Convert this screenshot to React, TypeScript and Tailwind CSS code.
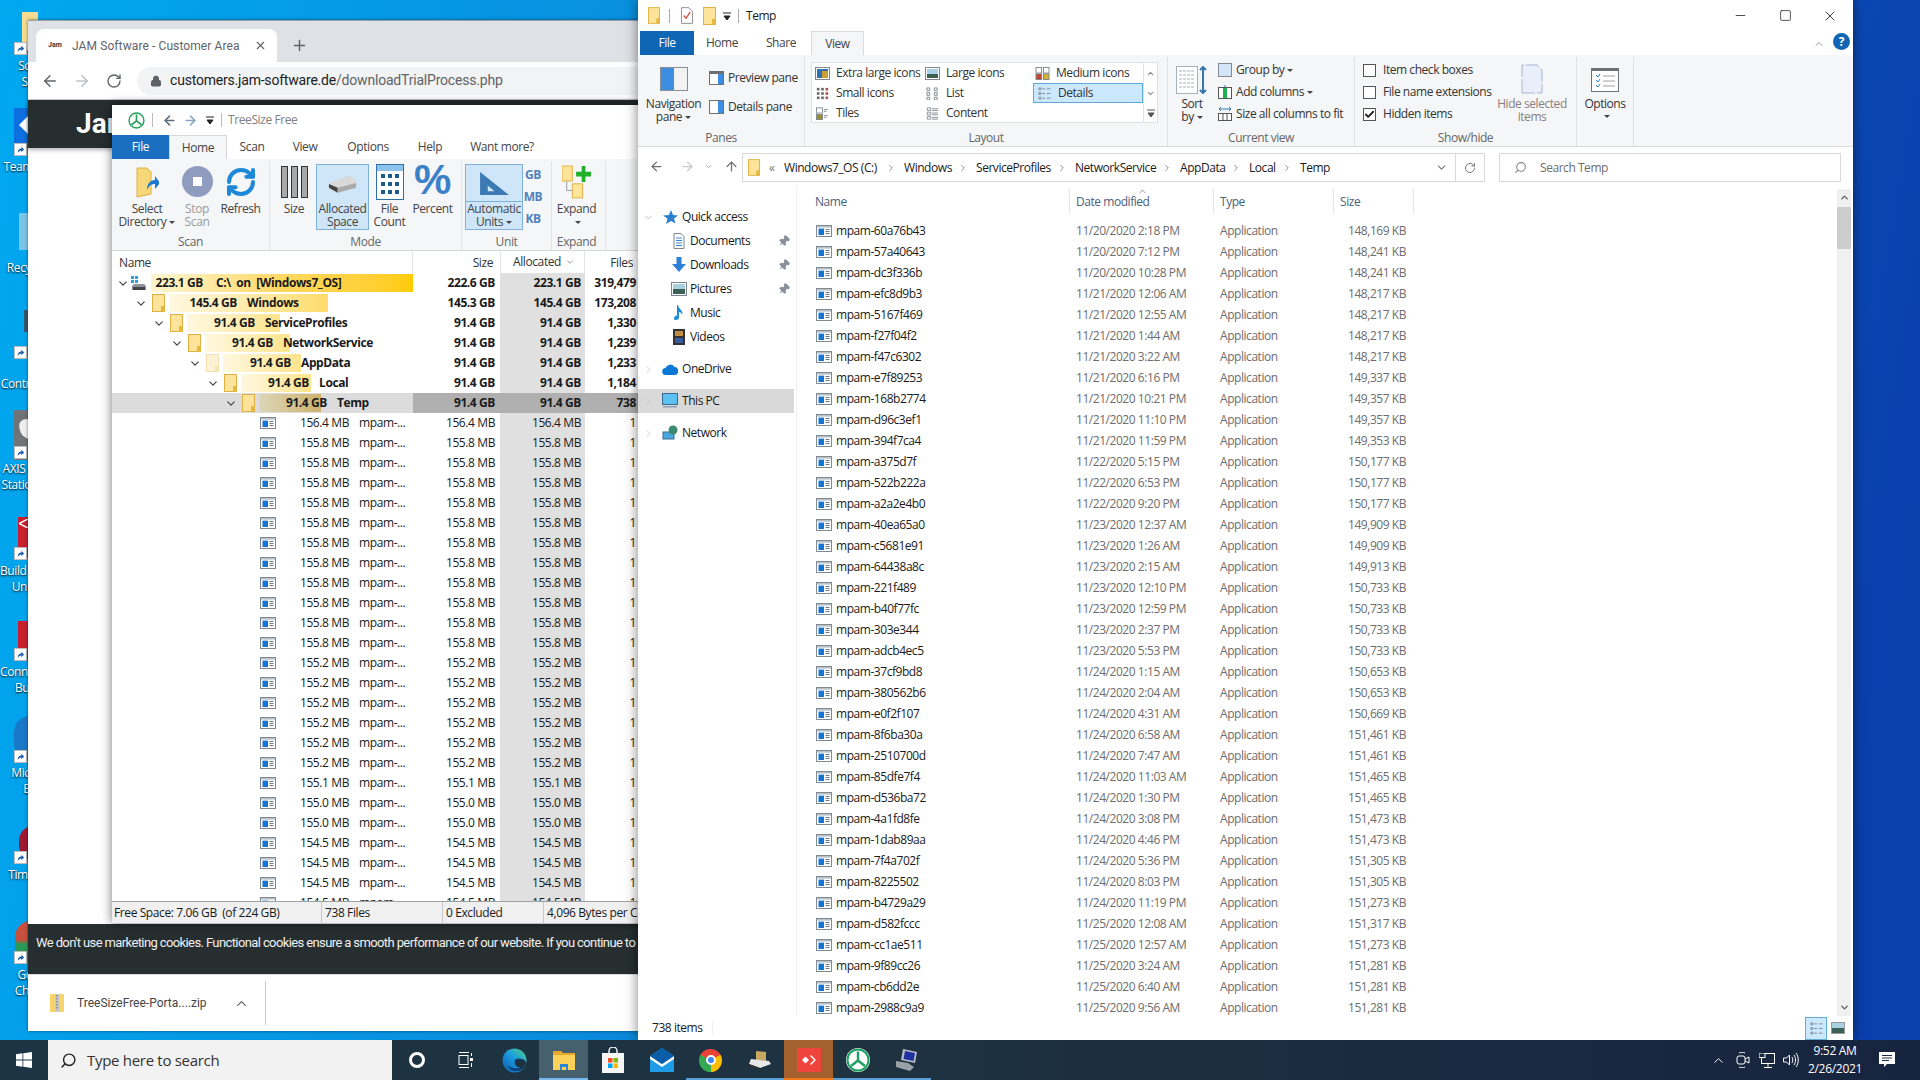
import React from "react";
import { ArrowLeft, ArrowRight, ArrowUp, RotateCw, Plus, X, Lock, ChevronDown, ChevronUp, ChevronRight, Search, Pin, RefreshCw, Minus, Square, Check } from "lucide-react";

const Folder = ({ pale = false, className = "w-[13px] h-[18px]" }: { pale?: boolean; className?: string }) => (
  <svg viewBox="0 0 13 18" className={className}>
    <rect x="0.5" y="0.5" width="12" height="17" fill={pale ? "#fdf3d4" : "#fde49a"} stroke={pale ? "#f0dfb0" : "#e0b040"} />
    <rect x="9" y="12" width="3.5" height="5.5" fill={pale ? "#f4e4b0" : "#e8b83c"} />
  </svg>
);

const Exe = ({ className = "w-[16px] h-[12px]" }: { className?: string }) => (
  <svg viewBox="0 0 16 12" className={className}>
    <rect x="0.5" y="0.5" width="15" height="11" fill="#fff" stroke="#7f8a93" />
    <rect x="1" y="1" width="14" height="1.6" fill="#b9c0c6" />
    <rect x="2.5" y="3.6" width="5.5" height="6.4" fill="#1476d2" />
    <path d="M9.5 4.5h4M9.5 6.5h4M9.5 8.5h4" stroke="#6c7a86" strokeWidth="1" />
  </svg>
);

const DESK = [
  { top: "top-[12px]", h: "h-[38px]", left: "left-[22px]", color: "bg-[#f6dc8e]", lines: ["Screen", "Shots"], ty: "top-[58px]", arrow: "top-[42px]" },
  { top: "top-[108px]", h: "h-[40px]", left: "left-[14px]", color: "bg-[#0e6fe0]", lines: ["TeamViewer"], ty: "top-[159px]", arrow: "top-[143px]" },
  { top: "top-[213px]", h: "h-[37px]", left: "left-[19px]", color: "bg-[#7cc4e8]", lines: ["Recycle Bin"], ty: "top-[260px]", arrow: "" },
  { top: "top-[310px]", h: "h-[22px]", left: "left-[24px]", color: "bg-[#39566a]", lines: ["Control Panel"], ty: "top-[376px]", arrow: "top-[346px]" },
  { top: "top-[410px]", h: "h-[50px]", left: "left-[14px]", color: "bg-[#6f7478]", lines: ["AXIS Camera", "Station Client"], ty: "top-[461px]", arrow: "top-[446px]" },
  { top: "top-[517px]", h: "h-[40px]", left: "left-[18px]", color: "bg-[#c8202f]", lines: ["Build Universal", "Universal"], ty: "top-[563px]", arrow: "top-[547px]" },
  { top: "top-[621px]", h: "h-[40px]", left: "left-[18px]", color: "bg-[#c8202f]", lines: ["Connect Build", "Building"], ty: "top-[664px]", arrow: "top-[648px]" },
  { top: "top-[716px]", h: "h-[44px]", left: "left-[14px]", color: "bg-[#1a78c8] rounded-l-full", lines: ["Microsoft", "Edge"], ty: "top-[765px]", arrow: "top-[750px]" },
  { top: "top-[825px]", h: "h-[36px]", left: "left-[19px]", color: "bg-[#a01830] rounded-l-full", lines: ["TimeSheet"], ty: "top-[867px]", arrow: "top-[851px]" },
  { top: "top-[921px]", h: "h-[42px]", left: "left-[15px]", color: "bg-[linear-gradient(#c8503c_45%,#2a9a58_55%)] rounded-l-full", lines: ["Google", "Chrome"], ty: "top-[967px]", arrow: "top-[951px]" },
];

function Desktop() {
  return (
    <>
      {DESK.map((d, i) => (
        <React.Fragment key={i}>
          <div className={`absolute ${d.top} ${d.h} ${d.left} w-[16px] ${d.color}`} />
          {d.arrow && (
            <div className={`absolute ${d.arrow} left-[14px] w-[13px] h-[13px] bg-white border border-[#bbb] flex items-center justify-center`}>
              <svg viewBox="0 0 10 10" className="w-[9px] h-[9px]"><path d="M2 9C2 5 4 4 6 4V2l3 3-3 3V6C4 6 3 7 2 9z" fill="#1a5fb4" /></svg>
            </div>
          )}
          <div className={`absolute ${d.ty} left-0 w-[72px] text-center text-white text-[12px] leading-[16px] font-['Open_Sans',sans-serif] tracking-[-0.4px] [text-shadow:0_1px_2px_#000]`}>
            {d.lines.map((l, j) => <div key={j} className="whitespace-nowrap">{l}</div>)}
          </div>
        </React.Fragment>
      ))}
      <svg viewBox="0 0 12 24" className="absolute left-[19px] top-[116px] w-[9px] h-[18px]"><path d="M12 0v24L0 12z" fill="#fff" /></svg>
      <svg viewBox="0 0 12 24" className="absolute left-[18px] top-[417px] w-[10px] h-[24px]"><path d="M12 0C4 0 0 4 2 12s4 8 10 12z" fill="#eee" /></svg>
      <svg viewBox="0 0 12 12" className="absolute left-[19px] top-[519px] w-[9px] h-[9px]"><path d="M12 0L0 6l12 6" fill="none" stroke="#fff" strokeWidth="2" /></svg>
    </>
  );
}

function ChromeWindow() {
  return (
    <div className="absolute left-[28px] top-[20px] w-[640px] h-[1011px] bg-white flex flex-col shadow-[0_0_3px_rgba(0,0,0,0.5)] font-['Roboto',sans-serif]">
      <div className="h-[42px] bg-[#dee1e6] flex items-end pl-[8px] border-t border-[#9aa0a6]">
        <div className="w-[241px] h-[33px] bg-white rounded-t-[8px] flex items-center pl-[12px] pr-[10px] text-[12px] text-[#5f6368]">
          <span className="text-[7px] font-bold w-[24px] text-[#333]">Jam</span>
          <span className="flex-1 whitespace-nowrap tracking-[0.1px]">JAM Software - Customer Area</span>
          <X size={13} className="text-[#5f6368]" />
        </div>
        <Plus size={17} className="ml-[14px] mb-[8px] text-[#5f6368]" />
      </div>
      <div className="h-[38px] flex items-center border-b border-[#ccc]">
        <ArrowLeft size={18} className="ml-[13px] text-[#5f6368]" />
        <ArrowRight size={18} className="ml-[14px] text-[#bdc1c6]" />
        <RotateCw size={16} className="ml-[15px] text-[#5f6368]" />
        <div className="ml-[15px] flex-1 h-[28px] rounded-l-full bg-[#f1f3f4] flex items-center pl-[13px]">
          <Lock size={12} className="text-[#5f6368] fill-[#5f6368]" />
          <span className="ml-[8px] text-[14px] text-[#202124] whitespace-nowrap tracking-[-0.2px]">customers.jam-software.de<span className="text-[#5f6368]">/downloadTrialProcess.php</span></span>
        </div>
      </div>
      <div className="flex-1 relative">
        <div className="h-[48px] bg-[#262e30] shadow-[0_2px_4px_rgba(0,0,0,0.3)] flex items-center pl-[48px] text-white text-[28px] font-bold">Jam</div>
      </div>
      <div className="h-[50px] bg-[#262e30] text-[#f0f0f0] text-[13px] pl-[8px] pt-[9px] whitespace-nowrap overflow-hidden tracking-[-0.61px]">We don't use marketing cookies. Functional cookies ensure a smooth performance of our website. If you continue to use our website</div>
      <div className="h-[57px] bg-white border-t border-[#ddd] flex items-center text-[12px] text-[#444]">
        <svg viewBox="0 0 14 18" className="ml-[22px] w-[14px] h-[18px]"><rect width="14" height="18" fill="#f5d46c" /><rect x="5" width="4" height="18" fill="#c9c9c9" /><path d="M7 1v15" stroke="#666" strokeDasharray="1.5 1.5" /></svg>
        <span className="ml-[13px] w-[136px] whitespace-nowrap">TreeSizeFree-Porta....zip</span>
        <ChevronUp size={15} className="ml-[21px] text-[#5f6368]" />
        <div className="ml-[16px] w-px h-[44px] bg-[#ccc]" />
      </div>
    </div>
  );
}

const Caret = () => <span className="inline-block ml-[3px] align-middle w-0 h-0 border-l-[3px] border-r-[3px] border-t-[3px] border-l-transparent border-r-transparent border-t-[#444]" />;

const RB = ({ w, icon, l1, l2, gray, cls = "", iconH = "h-[41px]" }: { w: string; icon: React.ReactNode; l1: string; l2?: React.ReactNode; gray?: boolean; cls?: string; iconH?: string }) => (
  <div className={`${w} ${cls} flex flex-col items-center ${gray ? "text-[#9a9a9a]" : "text-[#444]"}`}>
    <div className={`${iconH} flex items-center justify-center`}>{icon}</div>
    <div className="leading-[13px] whitespace-nowrap">{l1}</div>
    {l2 && <div className="leading-[13px] whitespace-nowrap">{l2}</div>}
  </div>
);

const TreeIcon = ({ className }: { className: string }) => (
  <svg viewBox="0 0 24 24" className={className}>
    <circle cx="12" cy="12" r="10.5" fill="none" stroke="currentColor" strokeWidth="2" />
    <path d="M12 3.5v9M12 12.5L5 18M12 12.5l7 5.5" stroke="currentColor" strokeWidth="2.4" fill="none" />
  </svg>
);

const GROUP = "flex flex-col border-r border-[#e2e4e7] h-[89px] mt-[2px] shrink-0";
const GLABEL = "mt-auto h-[17px] text-center text-[#666] leading-[17px]";

function TreeRibbon() {
  return (
    <div className="h-[92px] bg-[#f5f6f7] border-b border-[#d5d7da] flex shrink-0">
      <div className={`${GROUP} w-[158px]`}>
        <div className="flex pl-[5px]">
          <RB w="w-[60px]" icon={<svg viewBox="0 0 24 32" className="w-[24px] h-[32px]"><path d="M2 2h10l4 4v22l-14 3z" fill="#f6d77a" stroke="#e0b040" /><path d="M12 24c0-7 4-10 8-10V10l5 7-5 6v-5c-4 0-6 2-8 6z" fill="#1e78d0" /></svg>} l1="Select" l2={<>Directory<Caret /></>} />
          <RB w="w-[40px]" gray icon={<div className="w-[31px] h-[31px] rounded-full bg-[#8f9bbf] flex items-center justify-center"><div className="w-[9px] h-[9px] bg-white" /></div>} l1="Stop" l2="Scan" />
          <RB w="w-[47px]" icon={<RefreshCw size={32} strokeWidth={3} className="text-[#1e88d8]" />} l1="Refresh" />
        </div>
        <div className={GLABEL}>Scan</div>
      </div>
      <div className={`${GROUP} w-[192px]`}>
        <div className="flex pl-[2px]">
          <RB w="w-[44px]" icon={<div className="flex gap-[3px]">{[0, 1, 2].map((i) => <div key={i} className="w-[7px] h-[32px] bg-[#a8a8a8] border border-[#333]" />)}</div>} l1="Size" />
          <RB w="w-[53px]" cls="bg-[#cfe5f8] border border-[#7fb0dc] h-[66px] mt-[3px]" iconH="h-[37px]" icon={<svg viewBox="0 0 30 20" className="w-[29px] h-[20px]"><path d="M2 9l20-8 7 5v8l-20 5-8-5z" fill="#d9d9d9" /><path d="M1 10l9 4v5l-9-5z" fill="#444" /><path d="M10 14l19-5v5l-19 5z" fill="#aaa" /></svg>} l1="Allocated" l2="Space" />
          <RB w="w-[41px]" icon={<svg viewBox="0 0 28 36" className="w-[28px] h-[36px]"><rect x=".5" y=".5" width="27" height="35" fill="#fff" stroke="#2f6ea8" /><rect x="1" y="1" width="26" height="6" fill="#8cc4ee" />{[10, 18, 26].map((y) => [5, 12, 19].map((x) => <rect key={`${x}${y}`} x={x} y={y} width="4" height="4" fill="#1e5c8c" />))}</svg>} l1="File" l2="Count" />
          <RB w="w-[45px]" icon={<span className="text-[42px] leading-[40px] -mt-[3px] font-bold text-[#3b80c8] font-['Liberation_Sans',sans-serif]">%</span>} l1="Percent" />
        </div>
        <div className={GLABEL}>Mode</div>
      </div>
      <div className={`${GROUP} w-[90px]`}>
        <div className="flex pl-[3px]">
          <div className="w-[58px] h-[66px] mt-[3px] border border-[#7fb0dc] flex flex-col items-center bg-[#cfe5f8]">
            <div className="h-[37px] flex items-center justify-center border-b border-[#7fb0dc] w-full"><svg viewBox="0 0 32 26" className="w-[31px] h-[25px]"><path d="M1 25V1l30 24zM9 21h7L9 15z" fill="#3d79b5" fillRule="evenodd" /></svg></div>
            <div className="leading-[13px] text-[#444] whitespace-nowrap">Automatic</div>
            <div className="leading-[13px] text-[#444] whitespace-nowrap">Units<Caret /></div>
          </div>
          <div className="w-[20px] flex flex-col items-center text-[#4f81bd] font-bold leading-[22px] mt-[3px]">
            <span>GB</span><span>MB</span><span>KB</span>
          </div>
        </div>
        <div className={GLABEL}>Unit</div>
      </div>
      <div className={`${GROUP} w-[54px]`}>
        <RB w="w-[49px]" icon={<svg viewBox="0 0 32 36" className="w-[30px] h-[34px]"><rect x="0" y="1" width="11" height="16" fill="#fde49a" stroke="#e0b040" /><rect x="11" y="20" width="11" height="15" fill="#fde49a" stroke="#e0b040" /><path d="M5 17v10h6" stroke="#999" fill="none" /><path d="M21 1h4v6h6v5h-6v6h-4v-6h-6V7h6z" fill="#22b02c" /></svg>} l1="Expand" l2={<Caret />} />
        <div className="mt-auto h-[17px] w-[49px] text-center text-[#666] leading-[17px]">Expand</div>
      </div>
    </div>
  );
}

type T = { pl: string; bar: string; size: string; name: string; alloc: string; s: string; files: string; icon: "drive" | "folder" | "pale"; num?: string; gap?: string };
const TREE: T[] = [
  { pl: "pl-[1px]", bar: "w-[262px] from-[#fff6d0] via-[#ffd860] to-[#ffcc00]", size: "223.1 GB", name: "C:\\  on  [Windows7_OS]", s: "222.6 GB", alloc: "223.1 GB", files: "319,479", icon: "drive", num: "w-[52px]", gap: "ml-[13px]" },
  { pl: "pl-[19px]", bar: "w-[159px] from-[#fff8e0] to-[#ffdc6a]", size: "145.4 GB", name: "Windows", s: "145.3 GB", alloc: "145.4 GB", files: "173,208", icon: "folder" },
  { pl: "pl-[37px]", bar: "w-[93px] from-[#fff8e0] to-[#ffe48a]", size: "91.4 GB", name: "ServiceProfiles", s: "91.4 GB", alloc: "91.4 GB", files: "1,330", icon: "folder" },
  { pl: "pl-[55px]", bar: "w-[85px] from-[#fff8e0] to-[#ffe48a]", size: "91.4 GB", name: "NetworkService", s: "91.4 GB", alloc: "91.4 GB", files: "1,239", icon: "folder" },
  { pl: "pl-[73px]", bar: "w-[78px] from-[#fff8e0] to-[#ffe48a]", size: "91.4 GB", name: "AppData", s: "91.4 GB", alloc: "91.4 GB", files: "1,233", icon: "pale" },
  { pl: "pl-[91px]", bar: "w-[70px] from-[#fff8e0] to-[#ffe48a]", size: "91.4 GB", name: "Local", s: "91.4 GB", alloc: "91.4 GB", files: "1,184", icon: "folder" },
  { pl: "pl-[109px]", bar: "w-[62px] from-[#dcd6b8] to-[#cdb16c]", size: "91.4 GB", name: "Temp", s: "91.4 GB", alloc: "91.4 GB", files: "738", icon: "folder" },
];
const TFILES = ["156.4", ...Array(11).fill("155.8"), ...Array(6).fill("155.2"), "155.1", "155.0", "155.0", "154.5", "154.5", "154.5", "154.5"];

function TreeSize() {
  return (
    <div className="absolute left-[112px] top-[105px] w-[540px] h-[818px] bg-white flex flex-col text-[12px] text-[#1a1a1a] shadow-[0_0_10px_rgba(0,0,0,0.55)] font-['Open_Sans',sans-serif] tracking-[-0.4px]">
      <div className="h-[30px] flex items-center shrink-0 text-[#555]">
        <TreeIcon className="ml-[16px] w-[17px] h-[17px] text-[#27a060]" />
        <div className="ml-[7px] w-px h-[14px] bg-[#bbb]" />
        <ArrowLeft size={15} strokeWidth={2.4} className="ml-[9px] text-[#5b6b7c]" />
        <ArrowRight size={15} strokeWidth={2.4} className="ml-[6px] text-[#8aa3c0]" />
        <svg viewBox="0 0 8 8" className="ml-[8px] w-[8px] h-[8px]"><path d="M0 1h8M1 4h6l-3 4z" stroke="#222" fill="#222" strokeWidth="1" /></svg>
        <div className="ml-[7px] w-px h-[14px] bg-[#bbb]" />
        <span className="ml-[6px] text-[#808080]">TreeSize Free</span>
      </div>
      <div className="h-[24px] flex shrink-0 items-stretch text-[#444] leading-[23px]">
        <div className="w-[57px] bg-[#1a6fc0] text-white text-center">File</div>
        <div className="w-[58px] text-center border-x border-t border-[#d5d7da] bg-[#f5f6f7] h-[24px] -mb-px z-10">Home</div>
        <div className="ml-[5px] w-[40px] text-center">Scan</div>
        <div className="ml-[13px] w-[40px] text-center">View</div>
        <div className="ml-[18px] w-[50px] text-center">Options</div>
        <div className="ml-[17px] w-[40px] text-center">Help</div>
        <div className="ml-[12px] w-[80px] text-center whitespace-nowrap">Want more?</div>
      </div>
      <TreeRibbon />
      <div className="flex h-[22px] shrink-0 leading-[24px] text-[#333]">
        <div className="w-[301px] pl-[7px] border-r border-[#e3e3e3]">Name</div>
        <div className="w-[87px] text-right pr-[7px]">Size</div>
        <div className="w-[85px] pl-[12px] flex items-center bg-white border-x border-[#e3e3e3]">Allocated<ChevronDown size={10} className="ml-[4px] text-[#888]" /></div>
        <div className="w-[53px] text-right pr-[5px]">Files</div>
      </div>
      <div className="flex-1 overflow-hidden font-bold">
        {TREE.map((r, i) => {
          const sel = i === 6;
          return (
            <div key={i} className={`flex h-[20px] leading-[20px] ${sel ? "bg-[#dcdcdc]" : ""}`}>
              <div className={`w-[301px] ${r.pl} flex items-center shrink-0`}>
                <ChevronDown size={13} strokeWidth={2.2} className="text-[#444] ml-[2px] w-[16px] shrink-0" />
                <div className="w-[20px] flex items-center pl-[3px] shrink-0">
                  {r.icon === "drive" ? (
                    <svg viewBox="0 0 16 14" className="w-[16px] h-[14px] -ml-[3px]"><rect x="0" y="0" width="3" height="3" fill="#2aa0e0" /><rect x="4" y="0" width="3" height="3" fill="#2aa0e0" /><rect x="0" y="4" width="3" height="3" fill="#2aa0e0" /><rect x="4" y="4" width="3" height="3" fill="#2aa0e0" /><path d="M3 8h10l2 2v4H1v-4z" fill="#8d9499" /><rect x="2" y="11" width="12" height="3" fill="#444" /></svg>
                  ) : (
                    <Folder pale={r.icon === "pale"} />
                  )}
                </div>
                <div className="relative flex flex-1 h-[18px] leading-[18px] min-w-0">
                  <div className={`absolute left-[0px] top-0 bottom-0 ${r.bar} bg-gradient-to-r`} />
                  <span className={`relative ${r.num ?? "w-[68px]"} text-right shrink-0 whitespace-nowrap`}>{r.size}</span>
                  <span className={`relative ${r.gap ?? "ml-[10px]"} whitespace-pre`}>{r.name}</span>
                </div>
              </div>
              <div className={`w-[87px] text-right pr-[5px] ${sel ? "bg-[#b0b0b0]" : ""}`}>{r.s}</div>
              <div className={`w-[85px] text-right pr-[4px] ${sel ? "bg-[#b0b0b0]" : "bg-[#e0e0e0]"}`}>{r.alloc}</div>
              <div className={`w-[53px] text-right pr-[2px] ${sel ? "bg-[#b0b0b0]" : ""}`}>{r.files}</div>
            </div>
          );
        })}
        {TFILES.map((s, i) => (
          <div key={i} className="flex h-[20px] leading-[20px] font-normal">
            <div className="w-[301px] pl-[148px] flex items-center shrink-0">
              <Exe />
              <span className="ml-[1px] w-[72px] text-right whitespace-nowrap">{s} MB</span>
              <span className="ml-[10px] whitespace-nowrap">mpam-...</span>
            </div>
            <div className="w-[87px] text-right pr-[5px]">{s} MB</div>
            <div className="w-[85px] text-right pr-[4px] bg-[#e0e0e0]">{s} MB</div>
            <div className="w-[53px] text-right pr-[2px]">1</div>
          </div>
        ))}
      </div>
      <div className="h-[22px] bg-[#f0f0f0] border-t border-[#a0a0a0] flex shrink-0 leading-[21px] whitespace-pre overflow-hidden">
        <div className="w-[210px] pl-[2px] border-r border-[#c8c8c8] shrink-0">Free Space: 7.06 GB  (of 224 GB)</div>
        <div className="w-[121px] pl-[3px] border-r border-[#c8c8c8] shrink-0">738 Files</div>
        <div className="w-[101px] pl-[3px] border-r border-[#c8c8c8] shrink-0">0 Excluded</div>
        <div className="pl-[3px] shrink-0">4,096 Bytes per Cluster</div>
      </div>
    </div>
  );
}

const LI = ({ k }: { k: string }) => {
  const g = "#7d8790";
  const c = "w-[15px] h-[13px] shrink-0";
  switch (k) {
    case "xl": return <svg viewBox="0 0 15 13" className={c}><rect x=".5" y=".5" width="14" height="12" fill="#fff" stroke={g} /><rect x="2" y="2" width="11" height="9" fill="#2f6fb4" /><rect x="7" y="4" width="6" height="7" fill="#c9a030" /></svg>;
    case "l": return <svg viewBox="0 0 15 13" className={c}><rect x=".5" y=".5" width="14" height="12" fill="#fff" stroke={g} /><rect x="2" y="2" width="11" height="5" fill="#a8d0e8" /><rect x="2" y="7" width="11" height="4" fill="#3c6050" /></svg>;
    case "m": return <svg viewBox="0 0 15 14" className={c}><rect x=".5" y=".5" width="6" height="6" fill="#fff" stroke={g} /><rect x="8.5" y=".5" width="6" height="6" fill="#fff" stroke={g} /><rect x=".5" y="7.5" width="6" height="6" fill="#c84030" stroke={g} /><rect x="8.5" y="7.5" width="6" height="6" fill="#d8b030" stroke={g} /></svg>;
    case "s": return <svg viewBox="0 0 15 15" className={c}>{[1, 6, 11].map((x) => [1, 6, 11].map((y) => <rect key={`${x}${y}`} x={x} y={y} width="3" height="3" fill={x === 11 ? "#b05050" : "#666"} />))}</svg>;
    case "list": return <svg viewBox="0 0 15 14" className={c}><path d="M1.5 1h3v3h-3zM1.5 6h3v3h-3zM1.5 11h3v3h-3zM9.5 1h3v3h-3zM9.5 6h3v3h-3zM9.5 11h3v3h-3z" fill="none" stroke={g} /></svg>;
    case "det": return <svg viewBox="0 0 15 14" className={c}><path d="M1.5 1h2v2h-2zM1.5 6h2v2h-2zM1.5 11h2v2h-2z" fill="none" stroke={g} /><path d="M5 2h3M10 2h4M5 7h3M10 7h4M5 12h3M10 12h4" stroke={g} /></svg>;
    case "tiles": return <svg viewBox="0 0 15 15" className={c}><rect x=".5" y="1" width="7" height="6" fill="#fff" stroke={g} /><rect x=".5" y="8.5" width="7" height="6" fill="#a08a30" stroke={g} /><path d="M9 3h5M9 5h3M9 10h5M9 12h3" stroke={g} /></svg>;
    default: return <svg viewBox="0 0 15 15" className={c}><path d="M1.5 1h4v3h-4zM1.5 6h4v3h-4zM1.5 11h4v3h-4z" fill="none" stroke={g} /><path d="M7 2h7M7 4h7M7 7h7M7 9h7M7 12h7M7 14h7" stroke={g} /></svg>;
  }
};

const ECol = ({ k, t, sel }: { k: string; t: string; sel?: boolean }) => (
  <div className={`h-[20px] flex items-center pl-[3px] ${sel ? "bg-[#cce8ff] border border-[#5fa8dc] ml-[1px]" : ""}`}>
    <div className="w-[21px]"><LI k={k} /></div><span className="whitespace-nowrap">{t}</span>
  </div>
);

const EG = "flex flex-col border-r border-[#dfe1e4] h-[89px] mt-[2px] shrink-0 relative";
const EL = "mt-auto h-[16px] leading-[16px] text-center text-[#666]";

function ExplorerRibbon() {
  return (
    <div className="h-[92px] bg-[#f5f6f7] border-b border-[#dadbdc] flex shrink-0">
      <div className={`${EG} w-[167px]`}>
        <div className="flex h-[72px]">
          <div className="w-[71px] flex flex-col items-center pt-[10px] leading-[13px]">
            <svg viewBox="0 0 28 24" className="w-[28px] h-[24px] mb-[6px]"><rect x=".5" y=".5" width="27" height="23" fill="#f2f2f2" stroke="#8a8f95" /><rect x="1" y="1" width="13" height="22" fill="#3d8ee0" /></svg>
            <span className="whitespace-nowrap">Navigation</span>
            <span>pane<Caret /></span>
          </div>
          <div className="flex flex-col pt-[11px] gap-[15px]">
            <div className="flex items-center h-[20px]"><svg viewBox="0 0 15 14" className="w-[15px] h-[14px] mr-[4px]"><rect x=".5" y=".5" width="14" height="13" fill="#fff" stroke="#707070" /><rect x="1" y="1" width="13" height="2" fill="#707070" /><rect x="9" y="3" width="5" height="10" fill="#3d8ee0" /></svg>Preview pane</div>
            <div className="flex items-center h-[20px] -mt-[6px]"><svg viewBox="0 0 15 14" className="w-[15px] h-[14px] mr-[4px]"><rect x=".5" y=".5" width="14" height="13" fill="#fff" stroke="#707070" /><rect x="9" y="1" width="5" height="12" fill="#3d8ee0" /></svg>Details pane</div>
          </div>
        </div>
        <div className={EL}>Panes</div>
      </div>
      <div className={`${EG} w-[363px]`}>
        <div className="ml-[6px] mt-[5px] w-[347px] h-[61px] bg-white border border-[#dfe1e4] flex">
          <div className="w-[110px]"><ECol k="xl" t="Extra large icons" /><ECol k="s" t="Small icons" /><ECol k="tiles" t="Tiles" /></div>
          <div className="w-[110px]"><ECol k="l" t="Large icons" /><ECol k="list" t="List" /><ECol k="content" t="Content" /></div>
          <div className="w-[111px]"><ECol k="m" t="Medium icons" /><ECol k="det" t="Details" sel /></div>
          <div className="flex-1 border-l border-[#dfe1e4] flex flex-col items-center justify-around text-[#8a8a8a]">
            <ChevronUp size={9} strokeWidth={3} /><ChevronDown size={9} strokeWidth={3} /><svg viewBox="0 0 8 8" className="w-[8px] h-[8px]"><path d="M0 1h8M1 4h6l-3 4z" stroke="#555" fill="#555" /></svg>
          </div>
        </div>
        <div className={EL}>Layout</div>
      </div>
      <div className={`${EG} w-[187px]`}>
        <div className="flex h-[72px]">
          <div className="w-[48px] flex flex-col items-center pt-[9px] leading-[13px] shrink-0">
            <svg viewBox="0 0 32 28" className="w-[32px] h-[28px]"><rect x=".5" y=".5" width="21" height="27" fill="#fff" stroke="#a8b0b8" /><path d="M3 5h16M3 9h16M3 13h16M3 17h16M3 21h16" stroke="#a8b0b8" strokeDasharray="3 1" /><path d="M27 1v26M24 4l3-3 3 3M24 24l3 3 3-3" stroke="#3578a8" strokeWidth="2" fill="none" /></svg>
            <span className="mt-[3px]">Sort</span>
            <span>by<Caret /></span>
          </div>
          <div className="pl-[2px] flex flex-col pt-[2px] whitespace-nowrap">
            <div className="h-[22px] flex items-center"><svg viewBox="0 0 14 14" className="w-[14px] h-[14px] mr-[4px]"><rect x=".5" y=".5" width="13" height="13" fill="#d2e6f8" stroke="#889" /></svg>Group by<Caret /></div>
            <div className="h-[22px] flex items-center"><svg viewBox="0 0 14 14" className="w-[14px] h-[14px] mr-[4px]"><rect x=".5" y="2.5" width="13" height="11" fill="#fff" stroke="#555" /><rect x="5" y="3" width="4" height="10" fill="#22b050" /><path d="M7 0v2" stroke="#3578a8" /></svg>Add columns<Caret /></div>
            <div className="h-[22px] flex items-center"><svg viewBox="0 0 14 14" className="w-[14px] h-[14px] mr-[4px]"><path d="M1 2h12M1 2l2-2M1 2l2 2M13 2l-2-2M13 2l-2 2" stroke="#3578a8" fill="none" /><rect x=".5" y="6.5" width="13" height="7" fill="#fff" stroke="#555" /><path d="M5 7v6M9 7v6" stroke="#555" /></svg>Size all columns to fit</div>
          </div>
        </div>
        <div className={EL}>Current view</div>
      </div>
      <div className={`${EG} w-[222px]`}>
        <div className="flex h-[72px]">
          <div className="w-[142px] pl-[8px] pt-[2px] flex flex-col whitespace-nowrap shrink-0">
            {[["Item check boxes", false], ["File name extensions", false], ["Hidden items", true]].map(([t, c]) => (
              <div key={t as string} className="h-[22px] flex items-center">
                <div className="w-[13px] h-[13px] border border-[#555] bg-white mr-[7px] flex items-center justify-center">{c ? <Check size={11} strokeWidth={4} className="text-[#222]" /> : null}</div>{t as string}
              </div>
            ))}
          </div>
          <div className="w-[70px] flex flex-col items-center pt-[7px] leading-[13px] text-[#8a7f7f]">
            <svg viewBox="0 0 22 30" className="w-[22px] h-[30px] mb-[3px]"><path d="M1 29V1h15l5 5v23z" fill="#e8eefa" stroke="#a8b4d0" strokeDasharray="14 2" /></svg>
            <span className="whitespace-nowrap">Hide selected</span><span>items</span>
          </div>
        </div>
        <div className={EL}>Show/hide</div>
      </div>
      <div className={`${EG} w-[57px]`}>
        <div className="flex flex-col items-center pt-[11px] leading-[13px]">
          <svg viewBox="0 0 28 24" className="w-[28px] h-[24px] mb-[5px]"><rect x=".5" y=".5" width="27" height="23" fill="#fff" stroke="#707070" /><rect x="1" y="1" width="26" height="2" fill="#707070" /><path d="M5 7l2 2 2-3M5 12l2 2 2-3M5 17l2 2 2-3" stroke="#2a80d0" fill="none" /><path d="M12 8h12M12 13h12M12 18h12" stroke="#a0a0a0" /></svg>
          <span>Options</span>
          <span className="-mt-[1px]"><Caret /></span>
        </div>
      </div>
    </div>
  );
}

const Crumb = ({ w, t }: { w: string; t: string }) => (
  <div className={`${w} flex items-center shrink-0 whitespace-nowrap`}>{t}<ChevronRight size={10} className="ml-auto mr-[8px] text-[#777]" /></div>
);

const FILES: [string, string, string][] = [
  ["60a76b43", "11/20/2020 2:18 PM", "148,169"], ["57a40643", "11/20/2020 7:12 PM", "148,241"], ["dc3f336b", "11/20/2020 10:28 PM", "148,241"],
  ["efc8d9b3", "11/21/2020 12:06 AM", "148,217"], ["5167f469", "11/21/2020 12:55 AM", "148,217"], ["f27f04f2", "11/21/2020 1:44 AM", "148,217"],
  ["f47c6302", "11/21/2020 3:22 AM", "148,217"], ["e7f89253", "11/21/2020 6:16 PM", "149,337"], ["168b2774", "11/21/2020 10:21 PM", "149,357"],
  ["d96c3ef1", "11/21/2020 11:10 PM", "149,357"], ["394f7ca4", "11/21/2020 11:59 PM", "149,353"], ["a375d7f", "11/22/2020 5:15 PM", "150,177"],
  ["522b222a", "11/22/2020 6:53 PM", "150,177"], ["a2a2e4b0", "11/22/2020 9:20 PM", "150,177"], ["40ea65a0", "11/23/2020 12:37 AM", "149,909"],
  ["c5681e91", "11/23/2020 1:26 AM", "149,909"], ["64438a8c", "11/23/2020 2:15 AM", "149,913"], ["221f489", "11/23/2020 12:10 PM", "150,733"],
  ["b40f77fc", "11/23/2020 12:59 PM", "150,733"], ["303e344", "11/23/2020 2:37 PM", "150,733"], ["adcb4ec5", "11/23/2020 5:53 PM", "150,733"],
  ["37cf9bd8", "11/24/2020 1:15 AM", "150,653"], ["380562b6", "11/24/2020 2:04 AM", "150,653"], ["e0f2f107", "11/24/2020 4:31 AM", "150,669"],
  ["8f6ba30a", "11/24/2020 6:58 AM", "151,461"], ["2510700d", "11/24/2020 7:47 AM", "151,461"], ["85dfe7f4", "11/24/2020 11:03 AM", "151,465"],
  ["d536ba72", "11/24/2020 1:30 PM", "151,465"], ["4a1fd8fe", "11/24/2020 3:08 PM", "151,473"], ["1dab89aa", "11/24/2020 4:46 PM", "151,473"],
  ["7f4a702f", "11/24/2020 5:36 PM", "151,305"], ["8225502", "11/24/2020 8:03 PM", "151,305"], ["b4729a29", "11/24/2020 11:19 PM", "151,273"],
  ["d582fccc", "11/25/2020 12:08 AM", "151,317"], ["cc1ae511", "11/25/2020 12:57 AM", "151,273"], ["9f89cc26", "11/25/2020 3:24 AM", "151,281"],
  ["cb6dd2e", "11/25/2020 6:40 AM", "151,281"], ["2988c9a9", "11/25/2020 9:56 AM", "151,281"],
];

const NavIcon = ({ k }: { k: string }) => {
  const c = "w-[16px] h-[16px]";
  switch (k) {
    case "star": return <svg viewBox="0 0 16 16" className={c}><path d="M9 1l2 5 5 .5-4 3 1.5 5L9 12l-5 3 1.5-5.5L1 6.500 7 6z" fill="#2a7fd0" /></svg>;
    case "doc": return <svg viewBox="0 0 16 16" className={c}><path d="M3 .5h7l3 3v12H3z" fill="#fff" stroke="#7a8590" /><path d="M5 5h6M5 7.500h6M5 10h6M5 12.500h6" stroke="#3a8ad0" /></svg>;
    case "dl": return <svg viewBox="0 0 16 16" className={c}><path d="M5.500 0h5v7H15l-7 8-7-8h4.500z" fill="#2f80d8" /></svg>;
    case "pic": return <svg viewBox="0 0 16 14" className={c}><rect x=".5" y=".5" width="15" height="13" fill="#fff" stroke="#7a8590" /><rect x="2" y="2" width="12" height="5" fill="#a8d0e0" /><rect x="2" y="7" width="12" height="5" fill="#3a6058" /></svg>;
    case "music": return <svg viewBox="0 0 16 16" className={c}><path d="M7 0c0 4 6 5 4 10 0-2-2-3-3-3v6c0 2-5 3-5 .5S6 10 6 11V0z" fill="#1e8ad8" /></svg>;
    case "video": return <svg viewBox="0 0 16 16" className={c}><rect x="2" y="0" width="12" height="16" fill="#333" /><rect x="4" y="2" width="8" height="5" fill="#c09040" /><rect x="4" y="9" width="8" height="5" fill="#3a5aa0" /></svg>;
    case "cloud": return <svg viewBox="0 0 16 12" className={c}><path d="M4 12a3.500 3.500 0 0 1-.5-7A5 5 0 0 1 12.500 4 4 4 0 0 1 12 12z" fill="#0a78d4" /></svg>;
    case "pc": return <svg viewBox="0 0 16 16" className={c}><rect x=".5" y=".5" width="15" height="11" fill="#5cc0f0" stroke="#3a6a90" /><rect x="1" y="13" width="14" height="1.500" fill="#8aa0b4" /></svg>;
    default: return <svg viewBox="0 0 16 16" className={c}><rect x="1" y="7" width="11" height="7" fill="#4aa8e0" stroke="#3a6a90" /><circle cx="11" cy="5" r="4.500" fill="#3a8a70" /></svg>;
  }
};

const Nv = ({ k, t, sub, arrow, pin, sel, mt = "" }: { k: string; t: string; sub?: boolean; arrow?: "d" | "r"; pin?: boolean; sel?: boolean; mt?: string }) => (
  <div className={`h-[24px] flex items-center ${mt} ${sel ? "bg-[#d9d9d9]" : ""} ${sub ? "pl-[30px]" : ""}`}>
    {!sub && <div className="w-[20px] flex justify-center">{arrow === "d" ? <ChevronDown size={11} className="text-[#b5b5b5]" /> : <ChevronRight size={11} className="text-[#c8c8c8]" />}</div>}
    <div className={`${sub ? "w-[22px] pl-[3px]" : "w-[24px] pl-[4px]"}`}><NavIcon k={k} /></div>
    <span className="text-[#1a1a1a]">{t}</span>
    {pin && <Pin size={12} className="ml-auto mr-[4px] text-[#8a9099] fill-[#8a9099] rotate-45" />}
  </div>
);

function Explorer() {
  return (
    <div className="absolute left-[638px] top-0 w-[1215px] h-[1040px] bg-white flex flex-col text-[12px] text-[#333] shadow-[0_0_12px_rgba(0,0,0,0.5)] font-['Open_Sans',sans-serif] tracking-[-0.45px]">
      <div className="h-[31px] flex items-center shrink-0">
        <Folder className="ml-[10px] w-[12px] h-[17px]" />
        <div className="ml-[9px] w-px h-[14px] bg-[#aaa]" />
        <svg viewBox="0 0 13 18" className="ml-[11px] w-[12px] h-[17px]"><path d="M.5.500h8l4 4v13H.5z" fill="#fff" stroke="#888" /><path d="M3 9l2.500 3L10 5" stroke="#d04030" strokeWidth="1.300" fill="none" /></svg>
        <Folder className="ml-[10px] w-[13px] h-[18px]" />
        <svg viewBox="0 0 8 8" className="ml-[7px] w-[8px] h-[8px]"><path d="M0 1h8M1 4h6l-3 4z" stroke="#222" fill="#222" /></svg>
        <div className="ml-[7px] w-px h-[14px] bg-[#aaa]" />
        <span className="ml-[7px] text-[#1a1a1a]">Temp</span>
        <Minus size={15} strokeWidth={1.3} className="ml-auto text-[#222]" />
        <Square size={13} strokeWidth={1.4} className="ml-[31px] text-[#222]" />
        <X size={16} strokeWidth={1.3} className="ml-[30px] mr-[15px] text-[#222]" />
      </div>
      <div className="h-[24px] flex shrink-0 items-stretch leading-[23px] text-[#444]">
        <div className="ml-[2px] w-[54px] bg-[#0f66b4] text-white text-center">File</div>
        <div className="ml-[3px] w-[50px] text-center">Home</div>
        <div className="ml-[9px] w-[50px] text-center">Share</div>
        <div className="ml-[5px] w-[53px] text-center border-x border-t border-[#dadbdc] bg-[#f5f6f7] h-[24px] -mb-px z-10">View</div>
        <ChevronUp size={12} className="ml-auto mr-[8px] mt-[7px] text-[#999]" />
        <div className="mr-[3px] mt-[2px] w-[17px] h-[17px] rounded-full bg-[#1264b4] text-white text-[12px] font-bold text-center leading-[17px]">?</div>
      </div>
      <ExplorerRibbon />
      <div className="h-[39px] flex items-start pt-[6px] shrink-0">
        <ArrowLeft size={15} className="ml-[11px] mt-[6px] text-[#707070]" />
        <ArrowRight size={15} className="ml-[16px] mt-[6px] text-[#c8c8c8]" />
        <ChevronDown size={9} className="ml-[9px] mt-[9px] text-[#888]" />
        <ArrowUp size={15} className="ml-[11px] mt-[6px] text-[#707070]" />
        <div className="ml-[3px] w-[743px] h-[29px] border border-[#d9d9d9] flex items-center text-[#1a1a1a]">
          <Folder className="ml-[5px] w-[12px] h-[17px] shrink-0" />
          <span className="ml-[9px] w-[15px] text-[#777] shrink-0">«</span>
          <Crumb w="w-[120px]" t="Windows7_OS (C:)" />
          <Crumb w="w-[72px]" t="Windows" />
          <Crumb w="w-[99px]" t="ServiceProfiles" />
          <Crumb w="w-[105px]" t="NetworkService" />
          <Crumb w="w-[69px]" t="AppData" />
          <Crumb w="w-[51px]" t="Local" />
          <span>Temp</span>
          <ChevronDown size={13} className="ml-auto mr-[7px] text-[#777]" />
          <div className="w-px h-full bg-[#d9d9d9]" />
          <RotateCw size={12} className="mx-[8px] text-[#777]" />
        </div>
        <div className="ml-[14px] w-[342px] h-[29px] border border-[#d9d9d9] flex items-center text-[#6d6d6d]">
          <Search size={13} className="ml-[14px] text-[#888] -scale-x-100" />
          <span className="ml-[13px]">Search Temp</span>
        </div>
      </div>
      <div className="flex flex-1 min-h-0">
        <div className="w-[159px] shrink-0 border-r border-[#f0f0f0] pt-[19px] pr-[2px]">
          <Nv k="star" t="Quick access" arrow="d" />
          <Nv k="doc" t="Documents" sub pin />
          <Nv k="dl" t="Downloads" sub pin />
          <Nv k="pic" t="Pictures" sub pin />
          <Nv k="music" t="Music" sub />
          <Nv k="video" t="Videos" sub />
          <Nv k="cloud" t="OneDrive" mt="mt-[8px]" />
          <Nv k="pc" t="This PC" sel mt="mt-[8px]" />
          <Nv k="net" t="Network" mt="mt-[8px]" />
        </div>
        <div className="flex-1 min-w-0 overflow-hidden relative">
          <div className="flex h-[25px] mt-[3px] mb-[6px] leading-[25px] text-[#4c607a]">
            <div className="w-[273px] pl-[18px] border-r border-[#e5e5e5]">Name</div>
            <div className="w-[144px] pl-[6px] border-r border-[#e5e5e5]">Date modified</div>
            <div className="w-[120px] pl-[6px] border-r border-[#e5e5e5]">Type</div>
            <div className="w-[80px] pl-[6px] border-r border-[#e5e5e5]">Size</div>
          </div>
          <ChevronUp size={11} className="absolute left-[340px] top-[0px] text-[#888]" />
          {FILES.map(([n, d, s]) => (
            <div key={n} className="flex h-[21px] leading-[21px] items-center text-[#6d6d6d] whitespace-nowrap">
              <div className="w-[273px] pl-[19px] flex items-center text-[#1a1a1a]"><Exe /><span className="ml-[4px]">mpam-{n}</span></div>
              <div className="w-[144px] pl-[6px]">{d}</div>
              <div className="w-[120px] pl-[6px]">Application</div>
              <div className="w-[80px] text-right pr-[8px]">{s} KB</div>
            </div>
          ))}
        </div>
        <div className="w-[14px] mr-[2px] mt-[3px] bg-[#f0f0f0] flex flex-col items-center shrink-0">
          <ChevronUp size={11} strokeWidth={3} className="mt-[3px] mb-[4px] text-[#606060]" />
          <div className="w-full h-[42px] bg-[#cdcdcd]" />
          <ChevronDown size={11} strokeWidth={3} className="mt-auto mb-[3px] text-[#606060]" />
        </div>
      </div>
      <div className="h-[24px] flex items-center shrink-0 text-[#1a1a1a]">
        <span className="ml-[14px] w-[60px]">738 items</span>
        <div className="w-px h-[14px] bg-[#eee]" />
        <div className="ml-auto w-[22px] h-[23px] bg-[#cce8ff] border border-[#5fb0d8] flex items-center justify-center"><LI k="det" /></div>
        <div className="ml-[4px] mr-[8px] w-[14px] h-[12px] border border-[#999] bg-[linear-gradient(#a8d0e0_50%,#3a6058_50%)]" />
      </div>
    </div>
  );
}

const TB = ({ children, cls = "", bar = "" }: { children: React.ReactNode; cls?: string; bar?: string }) => (
  <div className={`w-[49px] h-[40px] flex items-center justify-center relative shrink-0 ${cls}`}>
    {children}
    {bar && <div className={`absolute bottom-0 left-0 right-0 h-[2px] ${bar}`} />}
  </div>
);

function Taskbar() {
  const win = <svg viewBox="0 0 16 16" className="w-[16px] h-[16px]"><path d="M0 2.200l6.500-.9v6.300H0zM7.300 1.200L16 0v7.600H7.300zM0 8.400h6.500v6.300L0 13.800zM7.300 8.400H16V16l-8.700-1.200z" fill="#fff" /></svg>;
  return (
    <div className="absolute left-0 right-0 bottom-0 h-[40px] bg-[linear-gradient(90deg,#1c3444,#1e3240_45%,#17243f)] flex items-center text-white text-[12px] font-['Open_Sans',sans-serif]">
      <div className="w-[48px] flex justify-center shrink-0">{win}</div>
      <div className="w-[344px] h-[40px] bg-[#f2f2f2] flex items-center shrink-0 text-[#333] text-[15px]">
        <Search size={17} className="ml-[12px] text-[#222] -scale-x-100" />
        <span className="ml-[10px] tracking-[-0.3px]">Type here to search</span>
      </div>
      <TB><div className="w-[16px] h-[16px] rounded-full border-[3px] border-white" /></TB>
      <TB><svg viewBox="0 0 16 16" className="w-[16px] h-[16px] -ml-[2px]"><path d="M2 .5h10M2 15.500h10" stroke="#fff" /><rect x="2" y="3.500" width="9" height="9" fill="none" stroke="#fff" /><rect x="13" y="6" width="3" height="3" fill="#fff" /><path d="M14.500 1v3M14.500 11v4" stroke="#fff" /></svg></TB>
      <TB>
        <svg viewBox="0 0 26 26" className="w-[25px] h-[25px]">
          <defs><linearGradient id="edgeg" x1="0" y1="1" x2="1" y2="0"><stop offset="0" stopColor="#0c59a4" /><stop offset=".55" stopColor="#1b9de2" /><stop offset="1" stopColor="#52d17a" /></linearGradient></defs>
          <circle cx="13" cy="13" r="12.500" fill="url(#edgeg)" />
          <path d="M25 15c-1 5-6 9-11 9-4 0-7-2-8-6 2 2 5 3 8 3 3 0 6-1 7-3-2 1-7 1-8-3-.5-2 1-4 4-4 4 0 7 1 8 4z" fill="#0d3f7c" />
          <path d="M17 12c3 0 6 1 8 3-.5 4-3 7-6 8-2 .5-4 .8-5 .5 3 0 6-2 7-4-2 1-6 1-7-2-.5-3 1-5.500 3-5.500z" fill="#1e3240" />
        </svg>
      </TB>
      <TB cls="bg-[#46606e]" bar="bg-[#76b9ed]"><svg viewBox="0 0 22 20" className="w-[22px] h-[20px]"><path d="M0 1h8l2 2h12v3H0z" fill="#e8a82c" /><path d="M0 5h22v15H0z" fill="#fbd35c" /><path d="M7 20v-6h8v6h-2v-3H9v3z" fill="#2a88d8" /></svg></TB>
      <TB><svg viewBox="0 0 22 26" className="w-[22px] h-[26px]"><path d="M7 7V4a4 4 0 0 1 8 0v3" stroke="#f0f0f0" strokeWidth="1.500" fill="none" /><rect y="6" width="22" height="20" fill="#f5f5f5" /><rect x="6" y="11" width="4.500" height="4.500" fill="#f25022" /><rect x="11.500" y="11" width="4.500" height="4.500" fill="#7fba00" /><rect x="6" y="16.500" width="4.500" height="4.500" fill="#00a4ef" /><rect x="11.500" y="16.500" width="4.500" height="4.500" fill="#ffb900" /></svg></TB>
      <TB><svg viewBox="0 0 24 24" className="w-[24px] h-[24px]"><path d="M0 8l12-8 12 8v16H0z" fill="#1f9be8" /><path d="M0 8l12 8 12-8v3l-12 8-12-8z" fill="#fff" /><path d="M0 8l12-8 12 8-12 8z" fill="#0a5ea8" /></svg></TB>
      <TB bar="bg-[#5aa0d8]"><div className="w-[23px] h-[23px] rounded-full bg-[conic-gradient(#ea4335_0deg_60deg,#fbbc04_60deg_180deg,#34a853_180deg_300deg,#ea4335_300deg_360deg)] flex items-center justify-center"><div className="w-[10px] h-[10px] rounded-full bg-[#4285f4] border-2 border-white" /></div></TB>
      <TB bar="bg-[#5aa0d8]"><svg viewBox="0 0 24 20" className="w-[24px] h-[20px]"><path d="M8 1l10 1v9l-10-1z" fill="#c8a860" /><path d="M3 9l18 2 2 3-11 4-11-4z" fill="#e8e8e8" /><path d="M1 14l11 4v2L1 16z" fill="#333" /></svg></TB>
      <TB cls="bg-[#a4612f]" bar="bg-[#f07818]"><div className="w-[24px] h-[24px] bg-[#ef443b] flex items-center justify-center"><svg viewBox="0 0 14 10" className="w-[14px] h-[10px]"><path d="M0 5l3.500-3.500L7 5 3.500 8.500z" fill="#fff" /><path d="M8 1l4 4-4 4 1 1 5-5-5-5z" fill="#fff" /></svg></div></TB>
      <TB bar="bg-[#5aa0d8]"><div className="w-[24px] h-[24px] rounded-full bg-white flex items-center justify-center"><TreeIcon className="w-[24px] h-[24px] text-[#1aa060]" /></div></TB>
      <TB bar="bg-[#5aa0d8]"><svg viewBox="0 0 24 24" className="w-[24px] h-[24px]"><path d="M8 1l14 3-2 11-14-3z" fill="#b8bcc8" /><path d="M10 3l10 2-1.500 8-10-2z" fill="#2030a0" /><path d="M1 13l12 2 6 4-4 4-14-4z" fill="#9aa0a8" /></svg></TB>
      <div className="ml-auto flex items-center h-full">
        <ChevronUp size={15} strokeWidth={1.5} className="mr-[10px]" />
        <svg viewBox="0 0 14 16" className="w-[14px] h-[16px] mr-[9px]"><rect x="1" y="4" width="8" height="8" rx="2" fill="none" stroke="#fff" /><path d="M9 7l4-2v6l-4-2M3 1c2-1 4-1 6 0M3 15c2 1 4 1 6 0" stroke="#fff" fill="none" /></svg>
        <svg viewBox="0 0 16 15" className="w-[16px] h-[15px] mr-[8px]"><rect x="2.500" y=".5" width="13" height="10" fill="none" stroke="#fff" /><rect x="0" y="0" width="6" height="4.500" fill="#1a2a40" stroke="#fff" /><path d="M9 11v3M5 14.500h8" stroke="#fff" /></svg>
        <svg viewBox="0 0 16 14" className="w-[16px] h-[14px] mr-[9px]"><path d="M.5 5h3l3-3v10l-3-3h-3zM9 4c1 2 1 4 0 6M11 2c2 3 2 7 0 10M13 0c3 4 3 10 0 14" stroke="#fff" fill="none" /></svg>
        <div className="w-[54px] text-center leading-[18px] whitespace-nowrap tracking-[-0.3px] flex flex-col items-center"><div>9:52 AM</div><div>2/26/2021</div></div>
        <div className="w-[50px] mr-[8px] flex justify-center"><svg viewBox="0 0 16 16" className="w-[16px] h-[16px]"><path d="M0 0h16v12H8l-3 3v-3H0z" fill="#fff" /><path d="M3 3.500h10M3 6h10M3 8.500h7" stroke="#1a2a40" /></svg></div>
      </div>
    </div>
  );
}

export default function App() {
  return (
    <div className="relative w-[1920px] h-[1080px] overflow-hidden bg-[linear-gradient(100deg,#00a8f0_0%,#0a8cdc_35%,#0a3fae_95%)]">
      <Desktop />
      <ChromeWindow />
      <TreeSize />
      <Explorer />
      <Taskbar />
    </div>
  );
}
